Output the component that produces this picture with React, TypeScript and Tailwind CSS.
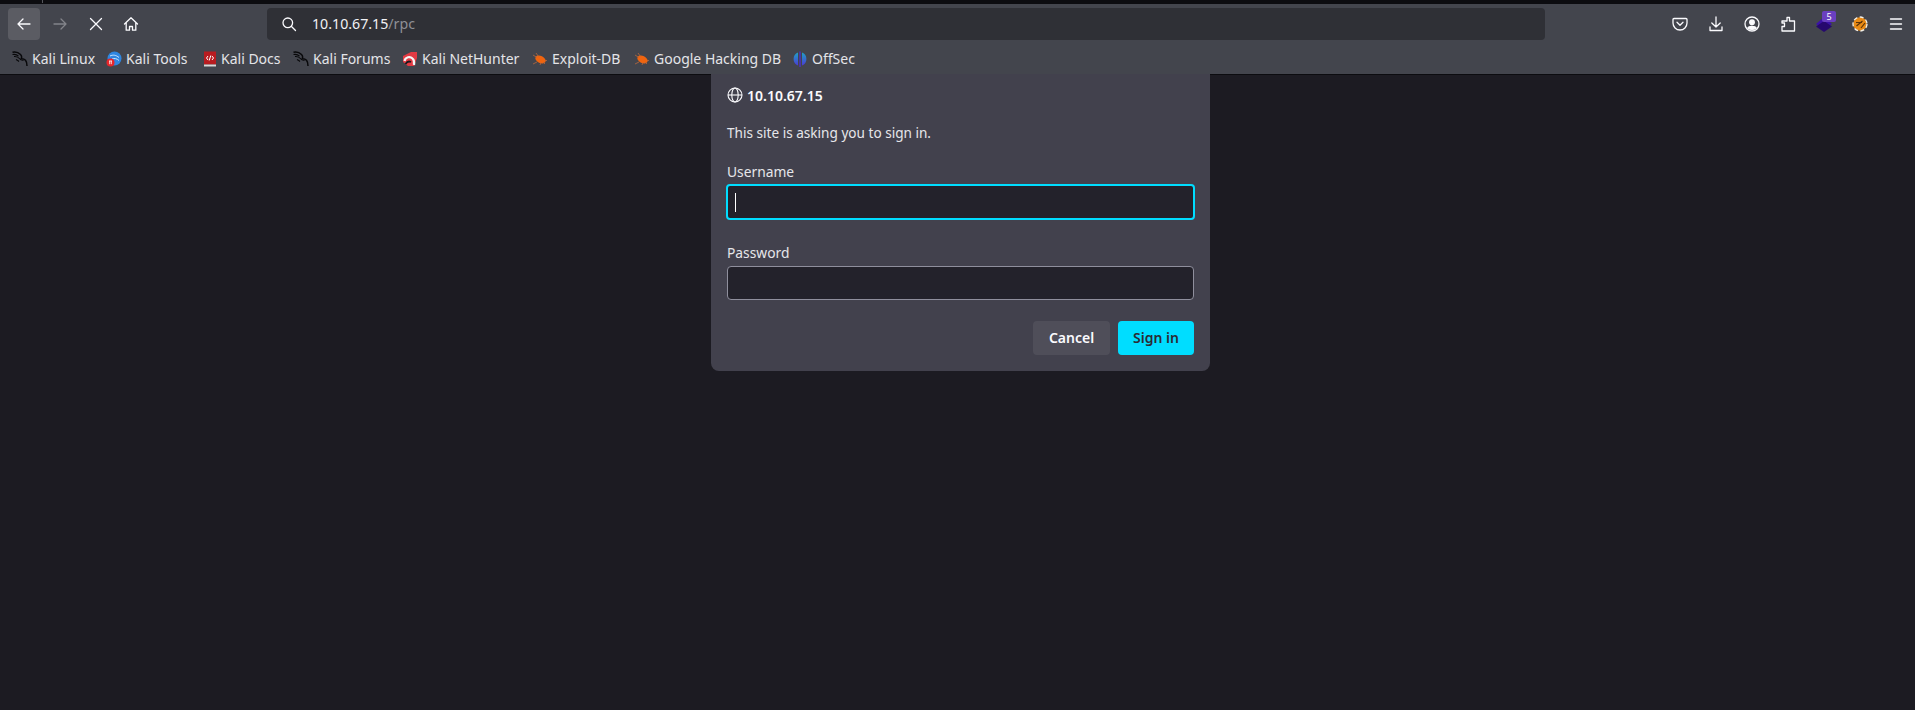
const font = "font-['Noto_Sans','Liberation_Sans',sans-serif]";

function Kali() {
  return (
    <svg width="16" height="16" viewBox="0 0 16 16" fill="none" className="shrink-0">
      <path d="M.5 1.200c3-.7 6 .3 8 2.300 1.500 1.500 1.300 3 .7 4.300 1.700-.2 3.300.5 4.300 1.500 1 1.200 1.500 3 1.500 5.700" stroke="#08080a" strokeWidth="1.500" />
      <path d="M.5 3.500c2.500-.5 4.500.2 6 1.700M2 5.500c2.500-.3 4.500.7 6 2.500 1 1.200 2.500 1.200 3.500 1.500M4 8.500c1 .5 2 1 3 2" stroke="#08080a" strokeWidth="1.100" />
    </svg>
  );
}

function Tools() {
  return (
    <svg width="16" height="16" viewBox="0 0 16 16" fill="none" className="shrink-0">
      <circle cx="8.500" cy="7.500" r="7" fill="#2f86e0" />
      <path d="M4 5c3-1.500 6-1 9 1.500M6 8c2-1 5-.5 7 1.500" stroke="#cfe6ff" strokeWidth="1" />
      <circle cx="4.500" cy="11.500" r="4" fill="#e5262b" />
      <path d="M3 10h3M3.700 10v3.200M5.300 10v3.200" stroke="#fff" strokeWidth=".8" />
    </svg>
  );
}

function Docs() {
  return (
    <svg width="14" height="16" viewBox="0 0 14 16" fill="none" className="shrink-0">
      <rect x="1" y="0.500" width="12" height="13" fill="#b81c20" />
      <rect x="1" y="13.500" width="12" height="2" fill="#d8d8d8" />
      <path d="M5 5 3.500 7 5 9M9 5l1.500 2L9 9M7.800 4.500 6.200 9.500" stroke="#fff" strokeWidth="1" />
    </svg>
  );
}

function NetHunter() {
  return (
    <svg width="16" height="16" viewBox="0 0 16 16" fill="none" className="shrink-0">
      <path d="M1 5 9 1h6v6l-3 8H6L1 11Z" fill="#e23a43" />
      <path d="M2.500 10C3.500 6 8 5 10.500 7.500c1.500 1.300 2 3.500 1.500 6.500" stroke="#f4f4f4" strokeWidth="2.200" />
      <path d="M3.500 13c1.500-2.500 3.500-3 5.500-2" stroke="#1a1a1e" strokeWidth="1.800" />
    </svg>
  );
}

function Bug() {
  return (
    <svg width="16" height="16" viewBox="0 0 16 16" fill="none" className="shrink-0">
      <ellipse cx="8.500" cy="8.500" rx="5.500" ry="3.500" transform="rotate(25 8.500 8.500)" fill="#f0640f" />
      <path d="M1 4 5 6.500M4 2 6.500 5.500M1 13l4-2M8 14l1-2.500M15 9.500h-2M13 13l-2-2" stroke="#b9683e" strokeWidth=".8" />
    </svg>
  );
}

function OffSecIcon() {
  return (
    <svg width="16" height="16" viewBox="0 0 16 16" className="shrink-0">
      <defs>
        <linearGradient id="os" x1="0" y1="0" x2="0" y2="1">
          <stop offset="0" stopColor="#1fa2c4" />
          <stop offset="1" stopColor="#4a3bd6" />
        </linearGradient>
      </defs>
      <path d="M6 1.500A7 7 0 0 0 6 14.500ZM10 1.500A7 7 0 0 1 10 14.500Z" fill="url(#os)" />
      <rect x="7.300" y="0.500" width="1.400" height="15.500" fill="#4b2fc9" />
    </svg>
  );
}

function Stroke({ children, size = 16, color = "#fbfbfe", sw = 1.3 }: { children: React.ReactNode; size?: number; color?: string; sw?: number }) {
  return (
    <svg width={size} height={size} viewBox="0 0 16 16" fill="none" stroke={color} strokeWidth={sw} strokeLinecap="round" strokeLinejoin="round">
      {children}
    </svg>
  );
}

const bookmarks: [React.ReactNode, string, string][] = [
  [<Kali />, "Kali Linux", "w-[94px]"],
  [<Tools />, "Kali Tools", "w-[97px]"],
  [<Docs />, "Kali Docs", "w-[90px]"],
  [<Kali />, "Kali Forums", "w-[109px]"],
  [<NetHunter />, "Kali NetHunter", "w-[130px]"],
  [<Bug />, "Exploit-DB", "w-[102px]"],
  [<Bug />, "Google Hacking DB", "w-[158px]"],
  [<OffSecIcon />, "OffSec", "w-[70px]"],
];

function Label({ children }: { children: React.ReactNode }) {
  return <div className="h-[20px] text-[13.800px] leading-[20px] text-[#e6e6ea]">{children}</div>;
}

export default function App() {
  return (
    <div className={`${font} flex h-[710px] w-[1915px] flex-col overflow-hidden bg-[#1c1b22]`}>
      <div className="h-[4px] shrink-0 bg-[#0c0c10] pl-[42px]">
        <div className="h-[3px] w-px bg-[#55565c]" />
      </div>
      <header className="flex h-[36px] shrink-0 items-start bg-[#43454d] pt-[4px]">
        <div className="flex w-[267px] shrink-0 items-center pl-[8px]">
          <div className="flex h-[32px] w-[32px] items-center justify-center rounded-[4px] bg-[#5b5c63]">
            <Stroke><path d="M14 8H2M7 3 2 8l5 5" /></Stroke>
          </div>
          <div className="ml-[4px] flex h-[32px] w-[32px] items-center justify-center">
            <Stroke color="#83848a"><path d="M2 8h12M9 3l5 5-5 5" /></Stroke>
          </div>
          <div className="ml-[4px] flex h-[32px] w-[32px] items-center justify-center">
            <Stroke><path d="m2.500 2.500 11 11M13.500 2.500l-11 11" /></Stroke>
          </div>
          <div className="ml-[3px] flex h-[32px] w-[32px] items-center justify-center">
            <Stroke><path d="M1.500 8 8 1.800 14.500 8M3.200 6.600v7.600h3.300V10.500h3v3.700h3.300V6.600" /></Stroke>
          </div>
        </div>
        <div className="flex h-[32px] w-[1278px] shrink-0 items-center rounded-[4px] bg-[#2f3036] pl-[14px]">
          <Stroke><circle cx="6.800" cy="6.800" r="4.800" /><path d="m10.500 10.500 4 4" /></Stroke>
          <div className="ml-[15px] text-[14.200px] leading-[20px] text-[#f1f1f4]">
            10.10.67.15<span className="text-[#8e8f95]">/rpc</span>
          </div>
        </div>
        <div className="flex flex-1 items-center pl-[117px]">
          <div className="flex h-[32px] w-[36px] items-center justify-center">
            <Stroke><path d="M2 2.500h12a1 1 0 0 1 1 1V7a7 7 0 0 1-14 0V3.500a1 1 0 0 1 1-1Z" /><path d="m5 6.300 3 3 3-3" /></Stroke>
          </div>
          <div className="flex h-[32px] w-[36px] items-center justify-center">
            <Stroke><path d="M8 1v10M3.800 7 8 11l4.200-4M2 11v3.500h12V11" /></Stroke>
          </div>
          <div className="flex h-[32px] w-[36px] items-center justify-center">
            <Stroke><circle cx="8" cy="8" r="7" /><circle cx="8" cy="6.300" r="2.300" fill="#fbfbfe" /><path d="M3.800 12c1-2.200 7.400-2.200 8.400 0-2 1.800-6.400 1.800-8.400 0Z" fill="#fbfbfe" /></Stroke>
          </div>
          <div className="flex h-[32px] w-[36px] items-center justify-center">
            <Stroke><path d="M7 1.500h2.500V5h5v10H2V10.500h2.500V7H2V5h5Z" /></Stroke>
          </div>
          <div className="flex h-[32px] w-[36px] items-center justify-center">
            <div className="relative">
              <svg width="16" height="16" viewBox="0 0 16 16">
                <path d="M0 8 8 1l8 7-8 6Z" fill="#3b12a8" />
                <path d="M0 10.500 8 5l8 5.500L8 16Z" fill="#26086e" />
              </svg>
              <div className="absolute left-[6px] top-[-5px] flex h-[11px] w-[14px] items-center justify-center rounded-[2px] bg-[#6a3fc0] text-[9px] leading-[11px] text-white">5</div>
            </div>
          </div>
          <div className="flex h-[32px] w-[36px] items-center justify-center">
            <svg width="16" height="16" viewBox="0 0 16 16" fill="none">
              <circle cx="8" cy="8" r="6.800" fill="#e88a15" />
              <circle cx="8" cy="8" r="7" stroke="#f5f0e6" strokeWidth="1.300" strokeDasharray="4 2.500" />
              <path d="M4 6.500h6M4.500 10l6-5M9 12l4-5" stroke="#5a3208" strokeWidth="1.200" />
            </svg>
          </div>
          <div className="flex h-[32px] w-[36px] items-center justify-center">
            <Stroke sw={1.400}><path d="M2.500 3h11M2.500 8h11M2.500 13h11" /></Stroke>
          </div>
        </div>
      </header>
      <nav className="flex h-[35px] shrink-0 items-center border-b border-[#0c0c10] bg-[#43454d] pt-[4px] pl-[12px]">
        {bookmarks.map(([icon, label, w]) => (
          <div key={label} className={`${w} flex shrink-0 items-center gap-[4px] text-[14px] leading-[20px] text-[#e4e4e8]`}>
            {icon}
            <span className="whitespace-nowrap">{label}</span>
          </div>
        ))}
      </nav>
      <main className="flex-1 pl-[711px]">
        <div className="-mt-[1px] h-[297px] w-[499px] rounded-b-[8px] bg-[#42414d] px-[16px] pt-[11px] text-[#fbfbfe]">
          <div className="flex h-[20px] items-center gap-[4px] text-[14px] font-semibold">
            <svg width="16" height="16" viewBox="0 0 16 16" fill="none" stroke="#fbfbfe" strokeWidth="1.100">
              <circle cx="8" cy="8" r="7" />
              <ellipse cx="8" cy="8" rx="3.200" ry="7" />
              <path d="M1 8h14" />
            </svg>
            10.10.67.15
          </div>
          <div className="mt-[18px] h-[20px] text-[13.600px] leading-[20px] text-[#e6e6ea]">This site is asking you to sign in.</div>
          <div className="mt-[19px]"><Label>Username</Label></div>
          <div className="-mx-px mt-[2px] flex h-[36px] items-center rounded-[4px] border-[2px] border-[#00ddff] bg-[#23222b] pl-[7px]">
            <div className="h-[19px] w-px bg-white" />
          </div>
          <div className="mt-[23px]"><Label>Password</Label></div>
          <div className="mt-[3px] h-[34px] rounded-[4px] border border-[#8f8f9d] bg-[#23222b]" />
          <div className="mt-[21px] flex justify-end gap-[8px] text-[14px] font-semibold">
            <div className="flex h-[34px] w-[77px] items-center justify-center rounded-[4px] bg-[#4f4e59] pb-[2px] text-[#fbfbfe]">Cancel</div>
            <div className="flex h-[34px] w-[76px] items-center justify-center rounded-[4px] bg-[#00ddff] pb-[2px] text-[#2b2a33]">Sign in</div>
          </div>
        </div>
      </main>
    </div>
  );
}
